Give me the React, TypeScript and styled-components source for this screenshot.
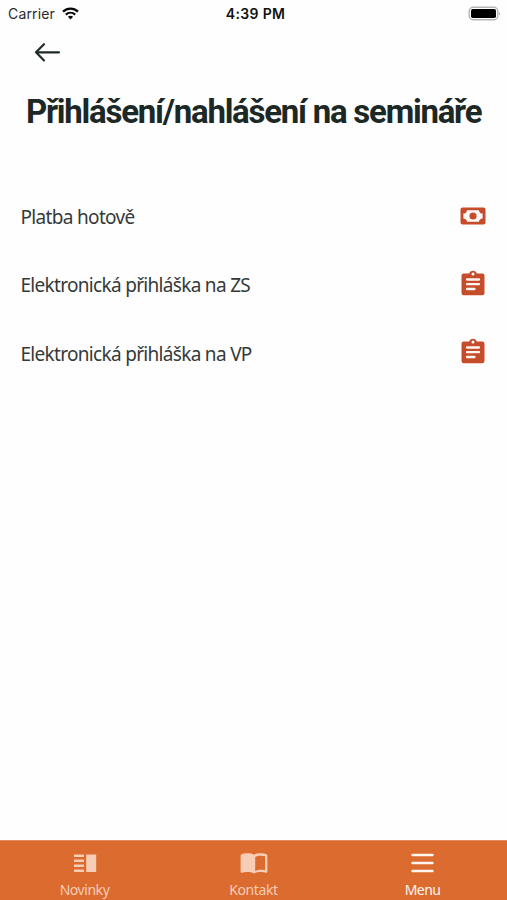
import React from 'react';
import styled, { createGlobalStyle } from 'styled-components';

const GlobalStyle = createGlobalStyle`
  * { box-sizing: border-box; }
  body { margin: 0; background: #fefefe; }
`;

const Screen = styled.div`
  display: flex;
  flex-direction: column;
  width: 507px;
  height: 900px;
  overflow: hidden;
  background: #fefefe;
  color: #1c2826;
  font-family: 'Noto Sans', sans-serif;
`;

const StatusBar = styled.div`
  display: grid;
  grid-template-columns: 1fr auto 1fr;
  align-items: center;
  height: 27px;
  padding: 0 6px 0 8px;
  font-family: Inter, sans-serif;
  color: #111;
`;

const Carrier = styled.div`
  display: flex;
  align-items: center;
  gap: 7px;
  font-size: 14px;
  letter-spacing: 0.15px;
  color: #2a2a2a;
`;

const Clock = styled.div`
  font-size: 14px;
  font-weight: 600;
  letter-spacing: 0.35px;
  padding-left: 2px;
`;

const Battery = styled.div`
  display: flex;
  justify-content: flex-end;
`;

const Header = styled.header`
  height: 50px;
  padding: 14px 0 0 33px;
`;

const BackButton = styled.button`
  display: block;
  padding: 0;
  border: 0;
  background: none;
  color: inherit;
`;

const Title = styled.h1`
  margin: 0;
  height: 105px;
  padding-left: 26px;
  padding-top: 11px;
  font-family: Roboto, 'Noto Sans', sans-serif;
  font-size: 33px;
  line-height: 48px;
  font-weight: 700;
  letter-spacing: -1.25px;
  white-space: nowrap;
`;

const List = styled.div`
  flex: 1;
`;

const Row = styled.div`
  display: flex;
  align-items: center;
  justify-content: space-between;
  height: 68.5px;
  padding: 0 21px 0 20.5px;
`;

const Label = styled.span<{ $spacing: number }>`
  padding-top: 1px;
  font-size: 19px;
  letter-spacing: ${(p) => p.$spacing}px;
  color: #343a39;
  white-space: nowrap;
`;

const TabBar = styled.nav`
  display: grid;
  grid-template-columns: repeat(3, 1fr);
  height: 60px;
  background: #db6b2f;
  border-top: 1px solid #e28a5c;
`;

const Tab = styled.div<{ $active?: boolean }>`
  display: flex;
  flex-direction: column;
  align-items: center;
  padding-top: 10px;
  color: ${(p) => (p.$active ? '#fff5ee' : '#f8cdb5')};
`;

const TabLabel = styled.span<{ $spacing: number }>`
  margin-top: 5px;
  font-size: 14px;
  line-height: 20px;
  letter-spacing: ${(p) => p.$spacing}px;
`;

const WifiIcon = () => (
  <svg width="17" height="13" viewBox="0 0 17 13" fill="none" stroke="#080808" strokeWidth="2.2">
    <path d="M1 4.6C5.2.5 11.8.5 16 4.6" />
    <path d="M3.8 7.6c2.7-2.5 6.7-2.5 9.4 0" />
    <path d="M8.5 12.4 5.9 9.8c1.5-1.3 3.7-1.3 5.2 0z" fill="#080808" stroke="none" />
  </svg>
);

const BatteryIcon = () => (
  <svg width="33" height="15" viewBox="0 0 33 15">
    <rect x="1.2" y="1.2" width="28.6" height="12.6" rx="4" fill="#fff" stroke="#b5b5b5" strokeWidth="1.4" />
    <rect x="3" y="3" width="25" height="9" rx="1.8" fill="#000" />
    <path d="M31 5.4q1.7 2.1 0 4.2z" fill="#a5a5a5" />
  </svg>
);

const ArrowIcon = () => (
  <svg width="28" height="24" viewBox="0 0 28 24" fill="none" stroke="#202b29" strokeWidth="2.2" strokeLinecap="round" strokeLinejoin="round">
    <path d="M26 11.3H3M11 3.2 3 11.3l8 8.1" />
  </svg>
);

const CashIcon = () => (
  <svg width="26" height="18" viewBox="0 0 26 18">
    <rect x=".5" y=".5" width="25" height="17" rx="2" fill="#c64d2b" />
    <path d="M7 3.200h12c0 2 1.500 3.400 3.600 3.400v4.800c-2.100 0-3.600 1.400-3.600 3.400H7c0-2-1.500-3.400-3.600-3.400V6.600C5.500 6.600 7 5.200 7 3.200z" fill="#fffaf7" />
    <circle cx="13" cy="9" r="3.6" fill="#c64d2b" />
  </svg>
);

const ClipboardIcon = () => (
  <svg width="26" height="30" viewBox="0 0 26 30">
    <path d="M3.700 3.500H9.200a4 4 0 0 1 7.600 0h5.500a2.200 2.200 0 0 1 2.200 2.200V23a2.200 2.200 0 0 1-2.200 2.200H3.700A2.200 2.200 0 0 1 1.500 23V5.700a2.200 2.200 0 0 1 2.200-2.200z" fill="#c64d2b" />
    <circle cx="13" cy="4" r="1.500" fill="#fff" />
    <path d="M7 9.500h12M7 14.200h12M7 19h7.500" stroke="#fff6f1" strokeWidth="2.300" strokeLinecap="round" />
  </svg>
);

const NewsIcon = () => (
  <svg width="24" height="24" viewBox="0 0 24 24" fill="currentColor">
    <path d="M1 3.500h10v2.600H1zM1 8.600h10v2.500H1zM1 13.500h10V16H1zM1 18.500h10V21H1zM13.200 3.500h10V21h-10z" />
  </svg>
);

const BookIcon = () => (
  <svg width="28" height="24" viewBox="0 0 28 24">
    <path d="M14 3.700C11 2 5 1.900 1.600 3.300Q.6 3.800.6 4.800v15.900q0 1.300 1.200 1c4-1 8.900-.9 12.200.9 3.300-1.800 8.200-1.900 12.200-.9q1.200.3 1.200-1V4.800q0-1-1-1.500C23 1.900 17 2 14 3.700zM15.200 5.900c2.500-1.300 6.500-1.500 9.800-.6v13.900c-3.300-.7-7.100-.5-9.800.8z" fill="currentColor" fillRule="evenodd" />
  </svg>
);

const MenuIcon = () => (
  <svg width="26" height="24" viewBox="0 0 26 24" stroke="currentColor" strokeWidth="2.400" strokeLinecap="round">
    <path d="M2.500 4h20M2.500 12h20M2.500 20h20" />
  </svg>
);

const items = [
  { text: 'Platba hotově', spacing: -0.67, Icon: CashIcon },
  { text: 'Elektronická přihláška na ZS', spacing: -0.69, Icon: ClipboardIcon },
  { text: 'Elektronická přihláška na VP', spacing: -0.69, Icon: ClipboardIcon },
];

const tabs = [
  { text: 'Novinky', spacing: -0.45, Icon: NewsIcon },
  { text: 'Kontakt', spacing: -0.4, Icon: BookIcon },
  { text: 'Menu', spacing: -0.6, Icon: MenuIcon, active: true },
];

export default function App() {
  return (
    <Screen>
      <GlobalStyle />
      <StatusBar>
        <Carrier>Carrier <WifiIcon /></Carrier>
        <Clock>4:39 PM</Clock>
        <Battery><BatteryIcon /></Battery>
      </StatusBar>
      <Header>
        <BackButton aria-label="Zpět"><ArrowIcon /></BackButton>
      </Header>
      <Title>Přihlášení/nahlášení na semináře</Title>
      <List>
        {items.map(({ text, spacing, Icon }) => (
          <Row key={text}>
            <Label $spacing={spacing}>{text}</Label>
            <Icon />
          </Row>
        ))}
      </List>
      <TabBar>
        {tabs.map(({ text, spacing, Icon, active }) => (
          <Tab key={text} $active={active}>
            <Icon />
            <TabLabel $spacing={spacing}>{text}</TabLabel>
          </Tab>
        ))}
      </TabBar>
    </Screen>
  );
}
